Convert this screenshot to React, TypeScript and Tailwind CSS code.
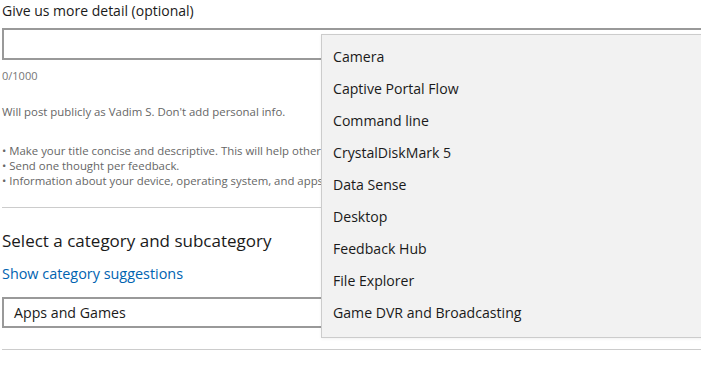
import React from "react";

const menuItems = [
  "Camera",
  "Captive Portal Flow",
  "Command line",
  "CrystalDiskMark 5",
  "Data Sense",
  "Desktop",
  "Feedback Hub",
  "File Explorer",
  "Game DVR and Broadcasting",
];

const tips = [
  "• Make your title concise and descriptive. This will help others find and upvote your feedback.",
  "• Send one thought per feedback.",
  "• Information about your device, operating system, and apps will be included automatically.",
];

const font = { fontFamily: '"Open Sans", "Noto Sans", sans-serif' };

export default function App() {
  return (
    <div
      style={font}
      className="relative w-[701px] h-[372px] overflow-hidden bg-white text-black"
    >
      <div className="w-[760px] pl-[2px] flex flex-col">
        <p className="text-[14px] leading-[22px] text-[#1a1a1a]">
          Give us more detail (optional)
        </p>
        <div className="mt-[6px] h-[32px] border-2 border-[#999999] bg-white" />
        <p className="mt-[8px] text-[11px] leading-[16px] text-[#767676]">0/1000</p>
        <p className="mt-[20px] text-[11.4px] leading-[16px] text-[#666666] whitespace-nowrap">
          Will post publicly as Vadim S. Don't add personal info.
        </p>
        <ul className="mt-[23px] w-[319px] overflow-hidden text-[11.4px] leading-[15px] text-[#666666]">
          {tips.map((t) => (
            <li key={t} className="whitespace-nowrap">
              {t}
            </li>
          ))}
        </ul>
        <div className="mt-[19px] h-px bg-[#cccccc]" />
        <p className="mt-[19px] text-[17px] leading-[28px] text-[#1a1a1a]">
          Select a category and subcategory
        </p>
        <p className="mt-[9px] text-[14.4px] leading-[20px] text-[#0063b1]">
          Show category suggestions
        </p>
        <div className="mt-[13px] h-[31px] border-2 border-[#999999] flex items-center pl-[10px] text-[14.2px] text-[#1a1a1a]">
          Apps and Games
        </div>
        <div className="mt-[21px] h-px bg-[#cccccc]" />
      </div>

      <div className="absolute left-[321px] top-[34px] w-[390px] h-[304px] bg-[#f2f2f2] border border-[#cccccc] pt-[6px] shadow-[0_1px_3px_rgba(0,0,0,0.06)]">
        {menuItems.map((item) => (
          <div
            key={item}
            className="h-[32px] flex items-center pl-[11px] text-[14.1px] text-[#1a1a1a]"
          >
            {item}
          </div>
        ))}
      </div>
    </div>
  );
}
